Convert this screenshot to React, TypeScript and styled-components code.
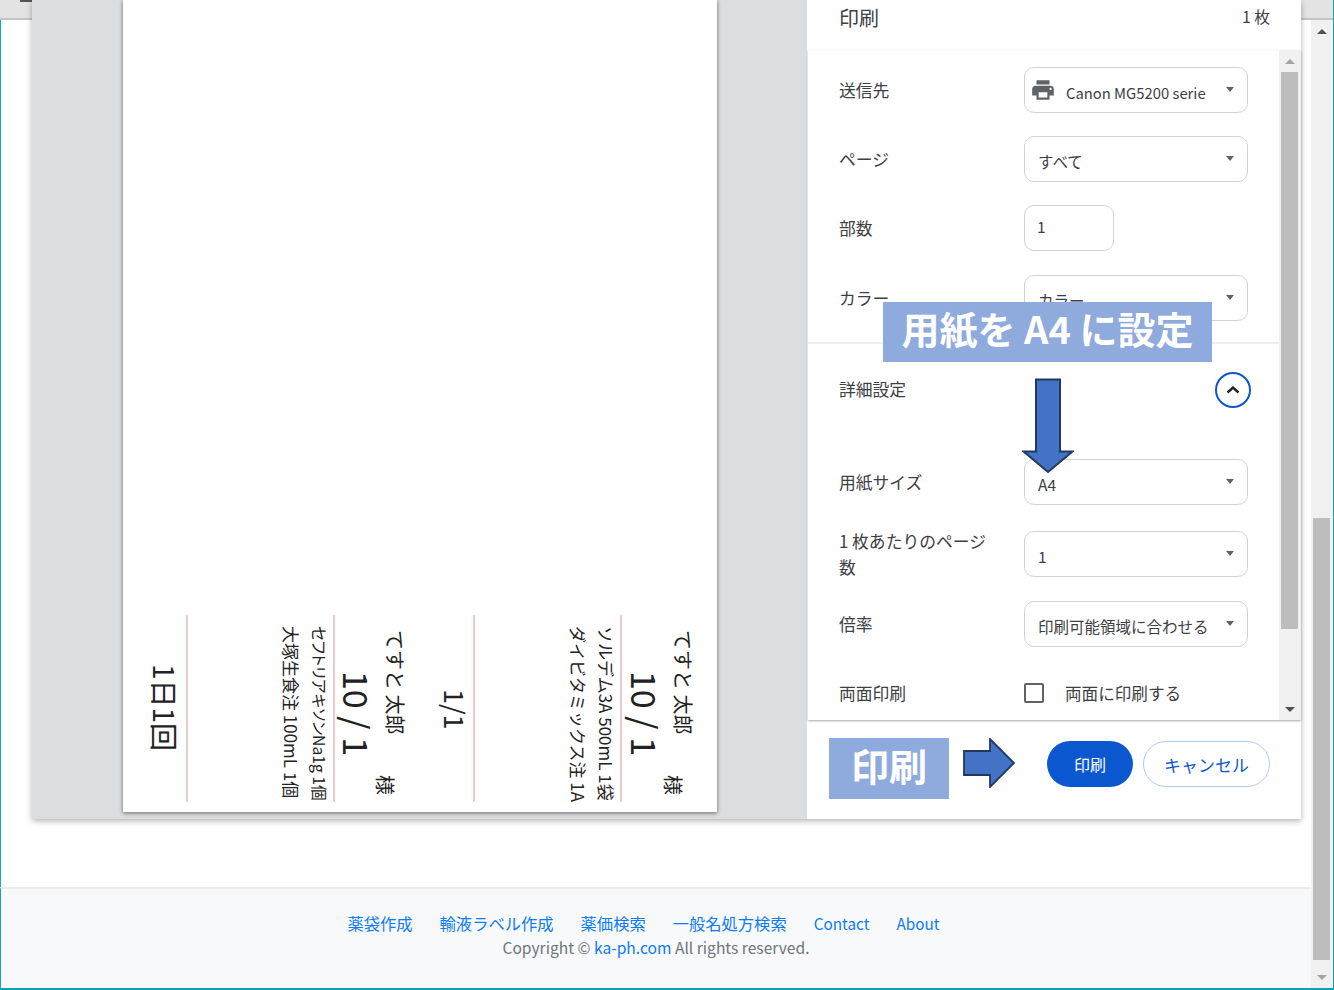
import React from 'react'
import styled, { createGlobalStyle } from 'styled-components'

const FONT = '"Noto Sans CJK JP", "Noto Sans", sans-serif'

const GlobalStyle = createGlobalStyle`
  html, body {
    margin: 0;
    padding: 0;
    background: #fff;
    overflow: hidden;
  }
  * {
    box-sizing: border-box;
  }
  body {
    font-family: ${FONT};
    color: #3c4043;
  }
`

const SelectField: React.FC<{ children: React.ReactNode }> = ({ children }) => (
  <SelectBox>
    {children}
    <Caret />
  </SelectBox>
)

const TicketHead = () => (
  <>
    <NameLine>
      <span>てすと 太郎</span>
      <Sama>様</Sama>
    </NameLine>
    <Days>10 / 1</Days>
  </>
)

const App: React.FC = () => {
  return (
    <Frame>
      <GlobalStyle />
      <PageColumn>
        <TopBar>
          <TopBarMark />
        </TopBar>
        <Content />
        <Footer>
          <FooterNav>
            <FooterLink>薬袋作成</FooterLink>
            <FooterLink>輸液ラベル作成</FooterLink>
            <FooterLink>薬価検索</FooterLink>
            <FooterLink>一般名処方検索</FooterLink>
            <FooterLink $latin>Contact</FooterLink>
            <FooterLink $latin>About</FooterLink>
          </FooterNav>
          <Copyright>
            Copyright © <CopyLink>ka-ph.com</CopyLink> All rights reserved.
          </Copyright>
        </Footer>
      </PageColumn>
      <PageScrollbar>
        <TopBar />
        <ScrollButton>
          <ArrowUp $color="#505050" />
        </ScrollButton>
        <PageTrack>
          <PageThumb />
        </PageTrack>
        <ScrollButton>
          <ArrowDown $color="#a3a3a3" />
        </ScrollButton>
      </PageScrollbar>

      <Dialog>
        <Preview>
          <Paper>
            <Strip>
              <Cell $width={97} $pad={24}>
                <TicketHead />
              </Cell>
              <Cell $width={147}>
                <DrugLine>ソルデム3A 500mL 1袋</DrugLine>
                <DrugLine>ダイビタミックス注 1A</DrugLine>
              </Cell>
              <Cell $width={140} $pad={3}>
                <PageNo>1/1</PageNo>
                <TicketHead />
              </Cell>
              <Cell $width={147}>
                <DrugLine $tight>セフトリアキソンNa1g 1個</DrugLine>
                <DrugLine>大塚生食注 100mL 1個</DrugLine>
              </Cell>
              <Dose>1日1回</Dose>
            </Strip>
          </Paper>
        </Preview>

        <Side>
          <SideHeader>
            <SideTitle>印刷</SideTitle>
            <SheetCount>1 枚</SheetCount>
          </SideHeader>

          <SettingsArea>
            <Settings>
              <Row>
                <Label>送信先</Label>
                <SelectField>
                  <PrinterIcon viewBox="0 0 24 24">
                    <path d="M19 8H5c-1.66 0-3 1.34-3 3v6h4v4h12v-4h4v-6c0-1.66-1.34-3-3-3zm-3 11H8v-5h8v5zm3-7c-.55 0-1-.45-1-1s.45-1 1-1 1 .45 1 1-.45 1-1 1zm-1-9H6v4h12V3z" />
                  </PrinterIcon>
                  <PrinterName>Canon MG5200 series</PrinterName>
                </SelectField>
              </Row>
              <Row>
                <Label>ページ</Label>
                <SelectField>
                  <Value>すべて</Value>
                </SelectField>
              </Row>
              <Row $gap={24}>
                <Label>部数</Label>
                <CopiesInput>1</CopiesInput>
              </Row>
              <Row $gap={21}>
                <Label>カラー</Label>
                <SelectField>
                  <Value>カラー</Value>
                </SelectField>
              </Row>
              <Divider />
              <Row $gap={47}>
                <Label>詳細設定</Label>
                <CollapseButton>
                  <svg width="16" height="16" viewBox="0 0 16 16" fill="none">
                    <path d="M2.5 10.5 8 5.5l5.5 5" stroke="#202124" strokeWidth="2.4" />
                  </svg>
                </CollapseButton>
              </Row>
              <Row $gap={26}>
                <Label>用紙サイズ</Label>
                <SelectField>
                  <Value>A4</Value>
                </SelectField>
              </Row>
              <Row $gap={24}>
                <Label>
                  1 枚あたりのページ
                  <br />数
                </Label>
                <SelectField>
                  <Value>1</Value>
                </SelectField>
              </Row>
              <Row>
                <Label>倍率</Label>
                <SelectField>
                  <Value>印刷可能領域に合わせる</Value>
                </SelectField>
              </Row>
              <Row>
                <Label>両面印刷</Label>
                <CheckRow>
                  <Checkbox />
                  <span>両面に印刷する</span>
                </CheckRow>
              </Row>
            </Settings>
            <SettingsScrollbar>
              <ScrollButton>
                <ArrowUp $color="#a3a3a3" />
              </ScrollButton>
              <SettingsTrack>
                <SettingsThumb />
              </SettingsTrack>
              <ScrollButton>
                <ArrowDown $color="#505050" />
              </ScrollButton>
            </SettingsScrollbar>
          </SettingsArea>

          <Actions>
            <PrimaryButton>印刷</PrimaryButton>
            <OutlineButton>キャンセル</OutlineButton>
          </Actions>
        </Side>
      </Dialog>

      <CalloutPaper>用紙を A4 に設定</CalloutPaper>
      <DownArrow viewBox="0 0 52 96">
        <path d="M14 1.5h24v72h12.5L26 94 1.5 73.5H14z" fill="#4472c4" stroke="#1f3864" strokeWidth="2" />
      </DownArrow>
      <CalloutPrint>印刷</CalloutPrint>
      <RightArrow viewBox="0 0 52 50">
        <path d="M1 13h26V1l24 24-24 24V37H1z" fill="#4472c4" stroke="#1f3864" strokeWidth="1.8" />
      </RightArrow>
    </Frame>
  )
}

const Frame = styled.div`
  position: relative;
  display: flex;
  width: 1334px;
  height: 990px;
  overflow: hidden;
  border-bottom: 2px solid #12a0b6;
`

const PageColumn = styled.div`
  flex: 1;
  display: flex;
  flex-direction: column;
`

const TopBar = styled.div`
  height: 20px;
  flex: none;
  background: #e3e3e3;
  border-bottom: 2px solid #c4c4c4;
`

const TopBarMark = styled.div`
  width: 12px;
  height: 2px;
  margin-left: 20px;
  background: #555;
`

const Content = styled.div`
  flex: 1;
  background: #fff;
  border-left: 1px solid #12a9c4;
`

const Footer = styled.footer`
  height: 101px;
  padding-top: 22px;
  background: #f8f9fa;
  border-top: 2px solid #ececec;
  border-left: 1px solid #12a9c4;
  text-align: center;
  line-height: 24px;
`

const FooterNav = styled.nav`
  display: flex;
  justify-content: center;
  align-items: baseline;
  gap: 27px;
  padding-right: 25px;
`

const FooterLink = styled.span<{ $latin?: boolean }>`
  color: #0d7bf5;
  font-size: ${(p) => (p.$latin ? 15.3 : 16.3)}px;
`

const Copyright = styled.div`
  color: #6c757d;
  font-size: 15.6px;
`

const CopyLink = styled.span`
  color: #0d7bf5;
`

const PageScrollbar = styled.div`
  width: 23px;
  display: flex;
  flex-direction: column;
  background: #f1f1f1;
  border-right: 1px solid #12a0b6;
`

const ScrollButton = styled.div`
  height: 22px;
  flex: none;
  display: flex;
  align-items: center;
  justify-content: center;
`

const ArrowUp = styled.div<{ $color: string }>`
  width: 0;
  height: 0;
  border-left: 5px solid transparent;
  border-right: 5px solid transparent;
  border-bottom: 5px solid ${(p) => p.$color};
`

const ArrowDown = styled.div<{ $color: string }>`
  width: 0;
  height: 0;
  border-left: 5px solid transparent;
  border-right: 5px solid transparent;
  border-top: 5px solid ${(p) => p.$color};
`

const PageTrack = styled.div`
  flex: 1;
  padding: 476px 3px 6px 2px;
`

const PageThumb = styled.div`
  height: 100%;
  background: #bdbdbd;
`

const Dialog = styled.div`
  position: absolute;
  top: 0;
  left: 32px;
  width: 1269px;
  height: 819px;
  display: flex;
  background: #fff;
  box-shadow: 0 2px 6px rgba(0, 0, 0, 0.3);
`

const Preview = styled.div`
  width: 775px;
  padding-left: 91px;
  background: #dcdde1;
`

const Paper = styled.div`
  width: 594px;
  height: 812px;
  display: flex;
  flex-direction: column;
  justify-content: flex-end;
  padding-bottom: 10px;
  background: #fff;
  box-shadow: 0 1px 4px rgba(0, 0, 0, 0.55);
`

const Strip = styled.div`
  height: 187px;
  display: flex;
  flex-direction: column;
  writing-mode: vertical-rl;
  text-orientation: sideways;
  color: #222;
`

const Cell = styled.div<{ $width: number; $pad?: number }>`
  width: ${(p) => p.$width}px;
  flex: none;
  padding-right: ${(p) => p.$pad ?? 0}px;
  border-left: 2px solid #ecc9cc;
`

const NameLine = styled.div`
  display: flex;
  justify-content: space-between;
  width: 30px;
  padding: 15px 0 7px;
  font-size: 20px;
  line-height: 20px;
`

const Sama = styled.span`
  align-self: flex-end;
`

const Days = styled.div`
  width: 40px;
  margin-left: -2px;
  margin-right: -2px;
  padding-top: 56px;
  font-size: 34px;
  line-height: 40px;
`

const DrugLine = styled.div<{ $tight?: boolean }>`
  padding-top: 11px;
  font-size: ${(p) => (p.$tight ? 15.7 : 17)}px;
  line-height: 28px;
  white-space: nowrap;
  font-feature-settings: ${(p) => (p.$tight ? "'palt'" : 'normal')};
`

const PageNo = styled.div`
  width: 30px;
  margin-left: 35px;
  padding-top: 74px;
  font-size: 27px;
  line-height: 30px;
`

const Dose = styled.div`
  width: 36px;
  margin-right: 3px;
  padding-top: 49px;
  font-size: 28px;
  line-height: 36px;
`

const Side = styled.div`
  flex: 1;
  margin-left: 1px;
  display: flex;
  flex-direction: column;
`

const SideHeader = styled.div`
  height: 50px;
  flex: none;
  display: flex;
  justify-content: space-between;
  padding: 4px 31px 0;
  font-size: 20px;
  line-height: 28px;
`

const SideTitle = styled.div``

const SheetCount = styled.div`
  margin-top: -1px;
  font-size: 15.8px;
`

const SettingsArea = styled.div`
  flex: 1;
  min-height: 0;
  display: flex;
  box-shadow: 0 1px 2px rgba(0, 0, 0, 0.35);
`

const Settings = styled.div`
  flex: 1;
  overflow: hidden;
  padding-top: 17px;
`

const Row = styled.div<{ $gap?: number }>`
  display: flex;
  align-items: center;
  height: 46px;
  margin-bottom: ${(p) => p.$gap ?? 23}px;
  padding-left: 31px;
`

const Label = styled.div`
  width: 185px;
  flex: none;
  margin-top: -1px;
  font-size: 16.8px;
  line-height: 26px;
`

const SelectBox = styled.div`
  position: relative;
  width: 224px;
  height: 46px;
  display: flex;
  align-items: center;
  padding: 4px 30px 0 13px;
  overflow: hidden;
  background: #fff;
  border: 1.5px solid #d2d2d2;
  border-radius: 10px;
`

const Caret = styled.div`
  position: absolute;
  top: 19px;
  right: 13px;
  width: 0;
  height: 0;
  border-left: 4.5px solid transparent;
  border-right: 4.5px solid transparent;
  border-top: 5px solid #5f6368;
`

const Value = styled.span`
  font-size: 15.5px;
  white-space: nowrap;
`

const PrinterIcon = styled.svg`
  position: absolute;
  left: 5px;
  top: 9px;
  width: 26px;
  height: 26px;
  fill: #5f6368;
`

const PrinterName = styled.span`
  margin-left: 28px;
  width: 140px;
  flex: none;
  overflow: hidden;
  font-size: 14.8px;
  white-space: nowrap;
`

const CopiesInput = styled.div`
  width: 89.5px;
  height: 46px;
  padding: 9px 12px 0;
  font-size: 15.5px;
  border: 1.5px solid #d2d2d2;
  border-radius: 10px;
`

const Divider = styled.div`
  height: 2px;
  margin-bottom: 22px;
  background: #efefef;
`

const CollapseButton = styled.div`
  width: 36px;
  height: 36px;
  margin-top: 2px;
  margin-left: 191px;
  display: flex;
  align-items: center;
  justify-content: center;
  border: 2.5px solid #0b57d0;
  border-radius: 50%;
`

const CheckRow = styled.div`
  display: flex;
  align-items: center;
  gap: 21px;
  margin-top: -1px;
  font-size: 16.6px;
`

const Checkbox = styled.div`
  width: 20px;
  height: 20px;
  border: 2px solid #5f6368;
  border-radius: 2px;
`

const SettingsScrollbar = styled.div`
  width: 22px;
  flex: none;
  display: flex;
  flex-direction: column;
  background: #f1f1f1;
`

const SettingsTrack = styled.div`
  flex: 1;
  padding: 0 3px 69px 2px;
`

const SettingsThumb = styled.div`
  height: 100%;
  background: #bdbdbd;
`

const Actions = styled.div`
  height: 99px;
  flex: none;
  display: flex;
  justify-content: flex-end;
  gap: 10px;
  padding: 21px 31px 0 0;
`

const PrimaryButton = styled.div`
  width: 86px;
  height: 46px;
  display: flex;
  align-items: center;
  justify-content: center;
  color: #fff;
  font-size: 16px;
  background: #0b57d0;
  border-radius: 23px;
`

const OutlineButton = styled.div`
  width: 127px;
  height: 46px;
  display: flex;
  align-items: center;
  justify-content: center;
  color: #0b57d0;
  font-size: 17px;
  background: #fff;
  border: 1.5px solid #aecbfa;
  border-radius: 23px;
`

const CalloutPaper = styled.div`
  position: absolute;
  left: 883px;
  top: 302px;
  width: 329px;
  height: 60px;
  display: flex;
  align-items: center;
  justify-content: center;
  padding-bottom: 10px;
  color: #fff;
  font-size: 38px;
  font-weight: 700;
  background: #8faadc;
  white-space: pre;
`

const CalloutPrint = styled.div`
  position: absolute;
  left: 829px;
  top: 738px;
  width: 120px;
  height: 61px;
  display: flex;
  align-items: center;
  justify-content: center;
  padding-bottom: 8px;
  color: #fff;
  font-size: 38px;
  font-weight: 700;
  background: #8faadc;
`

const DownArrow = styled.svg`
  position: absolute;
  left: 1022px;
  top: 378px;
  width: 52px;
  height: 96px;
`

const RightArrow = styled.svg`
  position: absolute;
  left: 963px;
  top: 738px;
  width: 52px;
  height: 50px;
`

export default App
